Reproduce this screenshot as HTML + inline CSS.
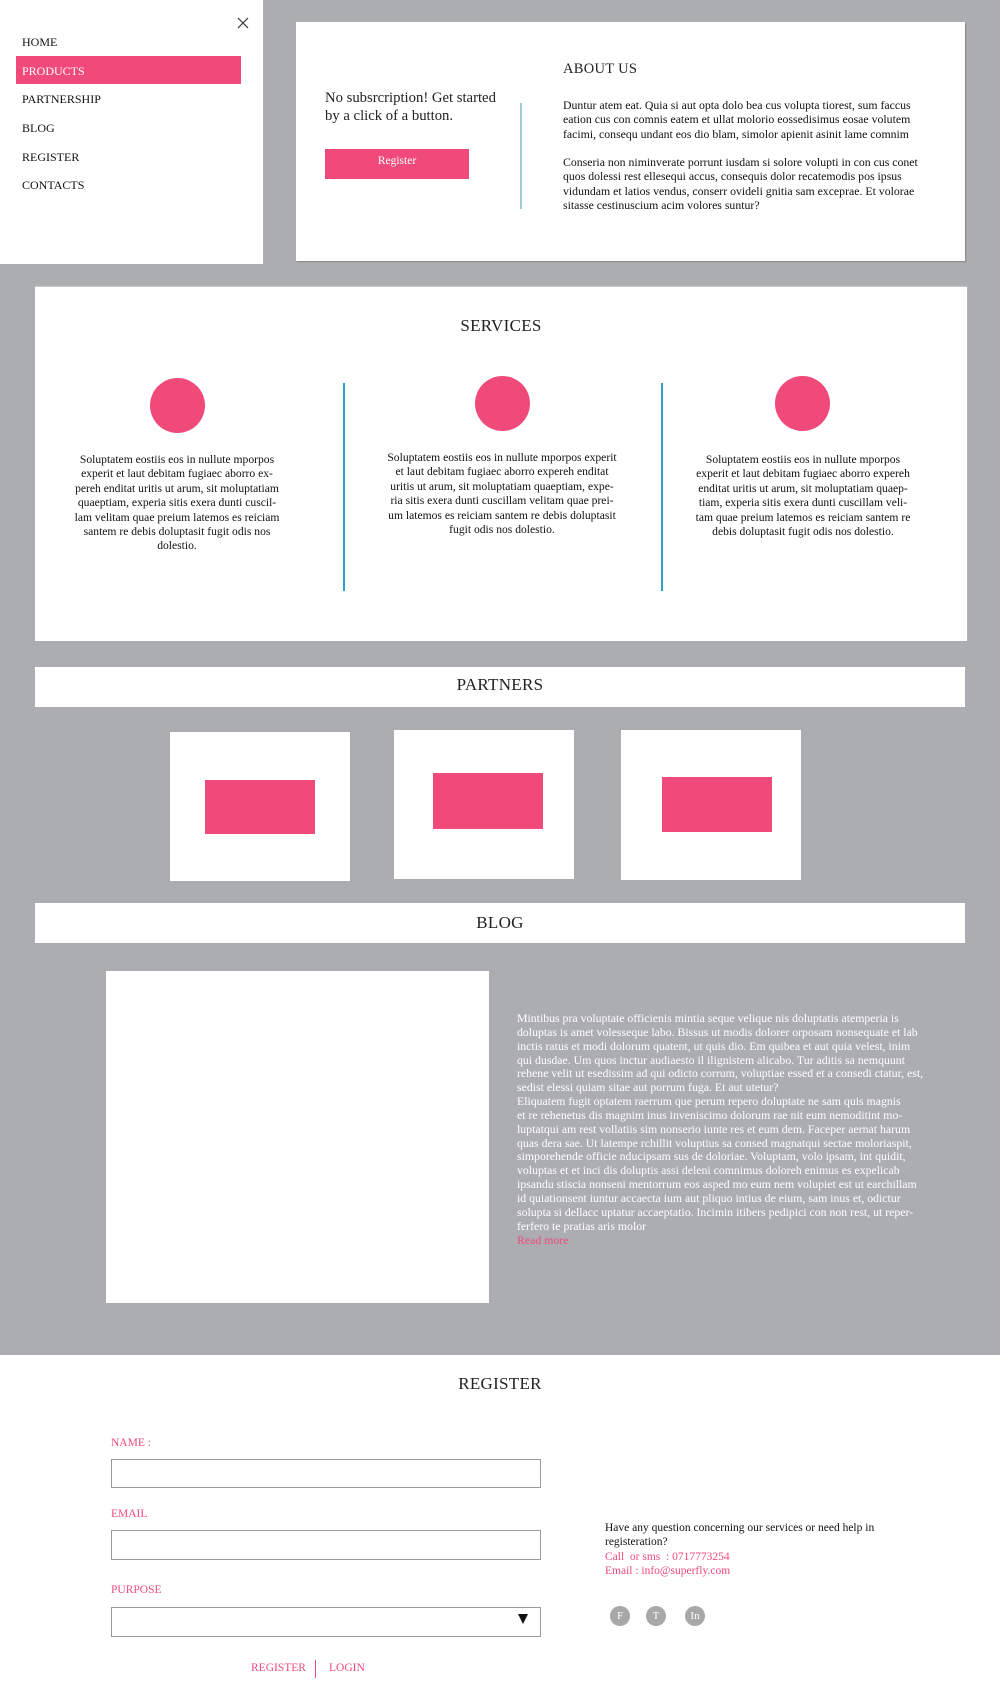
<!DOCTYPE html>
<html><head><meta charset="utf-8"><style>
*{margin:0;padding:0;box-sizing:border-box}
body{width:1000px;height:1700px;background:#fff;font-family:"Liberation Serif",serif;color:#222;position:relative;overflow:hidden}
.a{position:absolute}
.gray{left:0;top:0;width:1000px;height:1355px;background:#acadb1}
.w{background:#fff}
.nav{left:22px;font-size:12px;color:#111}
.pk{background:#f04a7b}
.nw{white-space:nowrap}
.c{text-align:center}
.sv{font-size:11.6px;line-height:14.4px;text-align:center;white-space:nowrap;color:#111}
.h{font-size:17px;color:#222;letter-spacing:.3px}
.lbl{font-size:11.5px;color:#f04a7b;left:111px}
.inp{left:111px;width:430px;height:30px;border:1.5px solid #9a9a9a;background:#fff}
.soc{width:20px;height:20px;border-radius:50%;background:#a8a8a8;color:#fff;font-size:11px;text-align:center;line-height:20px}
</style></head><body>
<div class="a gray"></div>
<div class="a w" style="left:0;top:0;width:263px;height:264px"></div>
<svg class="a" style="left:237px;top:17px" width="12" height="12"><path d="M1 1L11 11M11 1L1 11" stroke="#333" stroke-width="1.2"/></svg>
<div class="a nav" style="top:35px">HOME</div>
<div class="a pk" style="left:16px;top:56px;width:225px;height:28px"></div>
<div class="a nav" style="top:64px;color:#fff">PRODUCTS</div>
<div class="a nav" style="top:92px">PARTNERSHIP</div>
<div class="a nav" style="top:121px">BLOG</div>
<div class="a nav" style="top:150px">REGISTER</div>
<div class="a nav" style="top:178px">CONTACTS</div>

<div class="a w" style="left:296px;top:22px;width:669px;height:239px;box-shadow:1px 1px 1px #888"></div>
<div class="a nw" style="left:325px;top:89px;font-size:14.7px;line-height:18px;color:#222">No subsrcription! Get started<br>by a click of a button.</div>
<div class="a pk" style="left:325px;top:149px;width:144px;height:30px;color:#fff;font-size:11.5px;text-align:center;line-height:24px">Register</div>
<div class="a" style="left:520px;top:103px;width:1.5px;height:106px;background:#9cc9d9"></div>
<div class="a h" style="left:563px;top:61px;font-size:14.5px">ABOUT US</div>
<div class="a nw" style="left:563px;top:98px;font-size:11.8px;line-height:14.4px;color:#111">Duntur atem eat. Quia si aut opta dolo bea cus volupta tiorest, sum faccus<br>eation cus con comnis eatem et ullat molorio eossedisimus eosae volutem<br>facimi, consequ undant eos dio blam, simolor apienit asinit lame comnim</div>
<div class="a nw" style="left:563px;top:155px;font-size:11.8px;line-height:14.4px;color:#111">Conseria non niminverate porrunt iusdam si solore volupti in con cus conet<br>quos dolessi rest ellesequi accus, consequis dolor recatemodis pos ipsus<br>vidundam et latios vendus, conserr ovideli gnitia sam exceprae. Et volorae<br>sitasse cestinuscium acim volores suntur?</div>

<div class="a w" style="left:35px;top:287px;width:932px;height:354px;box-shadow:0 -1px 1px #ccc"></div>
<div class="a h c" style="left:35px;width:932px;top:316px">SERVICES</div>
<div class="a pk" style="left:150px;top:378px;width:55px;height:55px;border-radius:50%"></div>
<div class="a pk" style="left:475px;top:376px;width:55px;height:55px;border-radius:50%"></div>
<div class="a pk" style="left:775px;top:376px;width:55px;height:55px;border-radius:50%"></div>
<div class="a" style="left:343px;top:383px;width:1.5px;height:208px;background:#2ba3c8"></div>
<div class="a" style="left:661px;top:383px;width:1.5px;height:208px;background:#2ba3c8"></div>
<div class="a sv" style="left:57px;width:240px;top:453px">Soluptatem eostiis eos in nullute mporpos<br>experit et laut debitam fugiaec aborro ex-<br>pereh enditat uritis ut arum, sit moluptatiam<br>quaeptiam, experia sitis exera dunti cuscil-<br>lam velitam quae preium latemos es reiciam<br>santem re debis doluptasit fugit odis nos<br>dolestio.</div>
<div class="a sv" style="left:382px;width:240px;top:451px">Soluptatem eostiis eos in nullute mporpos experit<br>et laut debitam fugiaec aborro expereh enditat<br>uritis ut arum, sit moluptatiam quaeptiam, expe-<br>ria sitis exera dunti cuscillam velitam quae prei-<br>um latemos es reiciam santem re debis doluptasit<br>fugit odis nos dolestio.</div>
<div class="a sv" style="left:683px;width:240px;top:453px">Soluptatem eostiis eos in nullute mporpos<br>experit et laut debitam fugiaec aborro expereh<br>enditat uritis ut arum, sit moluptatiam quaep-<br>tiam, experia sitis exera dunti cuscillam veli-<br>tam quae preium latemos es reiciam santem re<br>debis doluptasit fugit odis nos dolestio.</div>

<div class="a w" style="left:35px;top:667px;width:930px;height:40px"></div>
<div class="a h c" style="left:35px;width:930px;top:675px">PARTNERS</div>
<div class="a w" style="left:170px;top:732px;width:180px;height:149px"></div>
<div class="a pk" style="left:205px;top:780px;width:110px;height:54px"></div>
<div class="a w" style="left:394px;top:730px;width:180px;height:149px"></div>
<div class="a pk" style="left:433px;top:773px;width:110px;height:56px"></div>
<div class="a w" style="left:621px;top:730px;width:180px;height:150px"></div>
<div class="a pk" style="left:662px;top:777px;width:110px;height:55px"></div>

<div class="a w" style="left:35px;top:903px;width:930px;height:40px"></div>
<div class="a h c" style="left:35px;width:930px;top:913px">BLOG</div>
<div class="a w" style="left:106px;top:971px;width:383px;height:332px"></div>
<div class="a nw" style="left:517px;top:1012px;font-size:11.8px;line-height:13.85px;color:#fff">Mintibus pra voluptate officienis mintia seque velique nis doluptatis atemperia is<br>doluptas is amet volesseque labo. Bissus ut modis dolorer orposam nonsequate et lab<br>inctis ratus et modi dolorum quatent, ut quis dio. Em quibea et aut quia velest, inim<br>qui dusdae. Um quos inctur audiaesto il ilignistem alicabo. Tur aditis sa nemquunt<br>rehene velit ut esedissim ad qui odicto corrum, voluptiae essed et a consedi ctatur, est,<br>sedist elessi quiam sitae aut porrum fuga. Et aut utetur?<br>Eliquatem fugit optatem raerrum que perum repero doluptate ne sam quis magnis<br>et re rehenetus dis magnim inus inveniscimo dolorum rae nit eum nemoditint mo-<br>luptatqui am rest vollatiis sim nonserio iunte res et eum dem. Faceper aernat harum<br>quas dera sae. Ut latempe rchillit voluptius sa consed magnatqui sectae moloriaspit,<br>simporehende officie nducipsam sus de doloriae. Voluptam, volo ipsam, int quidit,<br>voluptas et et inci dis doluptis assi deleni comnimus doloreh enimus es expelicab<br>ipsandu stiscia nonseni mentorrum eos asped mo eum nem volupiet est ut earchillam<br>id quiationsent iuntur accaecta ium aut pliquo intius de eium, sam inus et, odictur<br>solupta si dellacc uptatur accaeptatio. Incimin itibers pedipici con non rest, ut reper-<br>ferfero te pratias aris molor<br><span style="color:#f04a7b">Read more</span></div>

<div class="a h c" style="left:0;width:1000px;top:1374px">REGISTER</div>
<div class="a lbl" style="top:1437px">NAME :</div>
<div class="a inp" style="top:1459px;height:29px"></div>
<div class="a lbl" style="top:1508px">EMAIL</div>
<div class="a inp" style="top:1530px"></div>
<div class="a lbl" style="top:1584px">PURPOSE</div>
<div class="a inp" style="top:1607px"></div>
<svg class="a" style="left:518px;top:1614px" width="10" height="11"><path d="M0 0H10L5 10Z" fill="#111"/></svg>
<div class="a nw" style="left:251px;top:1662px;font-size:11.5px;color:#f04a7b">REGISTER</div>
<div class="a" style="left:315px;top:1660px;width:1px;height:18px;background:#f04a7b"></div>
<div class="a nw" style="left:329px;top:1662px;font-size:11.5px;color:#f04a7b">LOGIN</div>
<div class="a nw" style="left:605px;top:1521px;font-size:11.5px;line-height:14.4px;color:#111">Have any question concerning our services or need help in<br>registeration?<br><span style="color:#f04a7b">Call &nbsp;or sms &nbsp;: 0717773254<br>Email : info@superfly.com</span></div>
<div class="a soc" style="left:610px;top:1606px">F</div>
<div class="a soc" style="left:646px;top:1606px">T</div>
<div class="a soc" style="left:685px;top:1606px">In</div>
</body></html>
